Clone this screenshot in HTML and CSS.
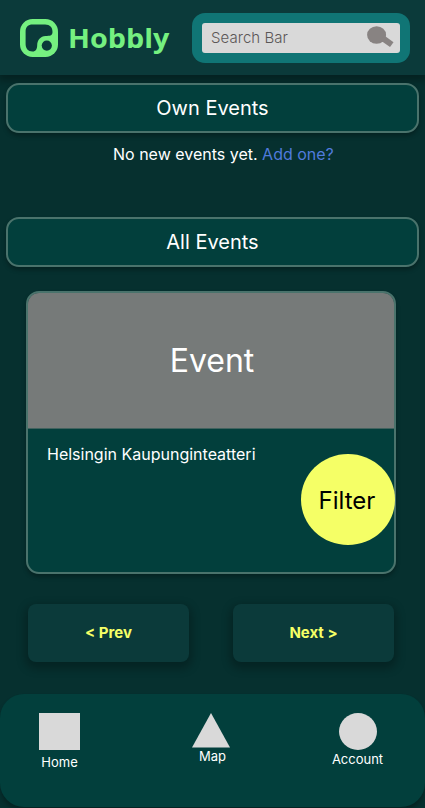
FILE: index.html
```html
<!DOCTYPE html>
<html lang="en">
<head>
<meta charset="utf-8">
<meta name="viewport" content="width=device-width, initial-scale=1">
<title>Hobbly</title>
<link rel="stylesheet" href="styles.css">
</head>
<body>
<header class="header">
  <a class="brand">
    <svg class="logo" viewBox="0 0 38 38" aria-hidden="true">
      <rect width="38" height="38" rx="12.5" fill="#75f080"/>
      <path d="M12.500 5.600H25C30 5.600 32.500 8.500 32.500 13C32.500 17 29.500 16.800 25.500 17C20.500 17.400 17.400 21 17.200 26C17.100 30 16 32.500 12.500 32.500C8 32.500 5.600 29.500 5.600 25V12.500C5.600 8.200 8.200 5.600 12.500 5.600Z" fill="#0b3a3a"/>
      <circle cx="26.8" cy="26.6" r="5.1" fill="#0b3a3a"/>
    </svg>
    <span class="wordmark">Hobbly</span>
  </a>
  <div class="search">
    <div class="search-field">
      <span class="search-text">Search Bar</span>
      <svg class="search-icon" viewBox="0 0 27 22" aria-hidden="true">
        <ellipse cx="9.600" cy="9" rx="9.500" ry="8.700" fill="#888382"/>
        <path d="M14 14.800L17.300 9.500L26.500 16.200L23 21Z" fill="#888382"/>
      </svg>
    </div>
  </div>
</header>
<main class="main">
  <h2 class="heading">Own Events</h2>
  <p class="notice">No new events yet. <a class="add">Add one?</a></p>
  <h2 class="heading">All Events</h2>
  <article class="card">
    <div class="card-image">Event</div>
    <div class="card-body">Helsingin Kaupunginteatteri</div>
    <button class="filter">Filter</button>
  </article>
  <div class="pager">
    <button class="page-button">&lt; Prev</button>
    <button class="page-button">Next &gt;</button>
  </div>
</main>
<nav class="nav">
  <a class="nav-item home">
    <svg width="41" height="37"><rect width="41" height="37" fill="#d9d9d9"/></svg>
    <span class="nav-label">Home</span>
  </a>
  <a class="nav-item map">
    <svg width="38" height="35"><path d="M19 0L38 34.500H0Z" fill="#d9d9d9"/></svg>
    <span class="nav-label">Map</span>
  </a>
  <a class="nav-item account">
    <svg width="38" height="37"><ellipse cx="19" cy="18.500" rx="19" ry="18.500" fill="#d9d9d9"/></svg>
    <span class="nav-label">Account</span>
  </a>
</nav>
</body>
</html>
```
FILE: styles.css
```css
* {
  box-sizing: border-box;
}

body {
  margin: 0;
  height: 808px;
  overflow: hidden;
  display: flex;
  flex-direction: column;
  background: #06302f;
  color: #fff;
  font-family: Inter, sans-serif;
}

button {
  border: 0;
  padding: 0;
  font-family: inherit;
}

.header {
  height: 75px;
  flex: none;
  display: flex;
  justify-content: space-between;
  align-items: center;
  padding: 0 15px 0 20px;
  background: #0b3a3a;
  box-shadow: 0 4px 8px 2px rgba(0, 0, 0, 0.3);
}

.brand {
  display: flex;
  align-items: center;
  gap: 10px;
}

.logo {
  width: 38px;
  height: 38px;
}

.wordmark {
  color: #75f080;
  font: 680 27.5px/38px "Open Sans", "Noto Sans", sans-serif;
  transform: scaleX(1.045);
  transform-origin: left;
}

.search {
  width: 218px;
  height: 50px;
  padding: 10px;
  border-radius: 13px;
  background: #107575;
}

.search-field {
  height: 30px;
  display: flex;
  justify-content: space-between;
  align-items: center;
  padding: 0 6px 0 9px;
  border-radius: 3px;
  background: #d9d9d9;
}

.search-text {
  color: #5b5757;
  font-size: 15px;
  font-weight: 350;
  letter-spacing: 0.05px;
}

.search-icon {
  width: 27px;
  height: 22px;
  margin-top: -1px;
}

.main {
  padding-top: 8px;
}

.heading {
  height: 50px;
  margin: 0 6px;
  border: 2px solid #4a736c;
  border-radius: 13px;
  background: #023f3c;
  box-shadow: 0 3px 4px rgba(0, 0, 0, 0.28);
  font-size: 20px;
  font-weight: 400;
  line-height: 46px;
  text-align: center;
}

.notice {
  height: 84px;
  margin: 0;
  padding: 11px 0 0 113px;
  font-size: 16px;
  line-height: 20px;
}

.add {
  color: #507bdc;
}

.card {
  position: relative;
  width: 370px;
  height: 283px;
  margin: 24px 0 0 26px;
  border: 2px solid #4a736c;
  border-radius: 13px;
  background: #023f3c;
  box-shadow: 0 3px 4px rgba(0, 0, 0, 0.28);
}

.card-image {
  height: 136px;
  padding-left: 2px;
  border-bottom: 1px solid #41625e;
  border-radius: 11px 11px 0 0;
  background: #767a79;
  font-size: 32px;
  line-height: 136px;
  text-align: center;
}

.card-body {
  padding: 15px 19px;
  font-size: 16px;
  line-height: 20px;
}

.filter {
  position: absolute;
  right: -1px;
  bottom: 27px;
  width: 94px;
  height: 91px;
  padding: 2px 2px 0 0;
  border-radius: 50%;
  background: #f5ff66;
  color: #000;
  font-size: 24px;
}

.pager {
  display: flex;
  gap: 44px;
  padding: 30px 0 0 28px;
}

.page-button {
  width: 161px;
  height: 58px;
  padding-bottom: 1px;
  border-radius: 8px;
  background: #0b3a3a;
  box-shadow: 0 4px 8px 3px rgba(0, 0, 0, 0.25);
  color: #f5ff66;
  font-size: 15px;
  font-weight: 750;
}

.nav {
  height: 113px;
  flex: none;
  display: flex;
  justify-content: space-between;
  margin-top: 32px;
  padding: 19px 47px 0 39px;
  border-radius: 24px;
  background: #023f3c;
  box-shadow: 0 4px 4px rgba(0, 0, 0, 0.25);
}

.nav-item {
  width: 41px;
  display: flex;
  flex-direction: column;
  align-items: center;
}

.nav-item svg {
  flex: none;
}

.nav-label {
  font-size: 13px;
  line-height: 16px;
}

.home .nav-label {
  margin-top: 4px;
}

.map {
  margin-left: 5px;
}

.map .nav-label {
  padding-left: 3px;
}

.account .nav-label {
  margin-top: 1px;
}
```
